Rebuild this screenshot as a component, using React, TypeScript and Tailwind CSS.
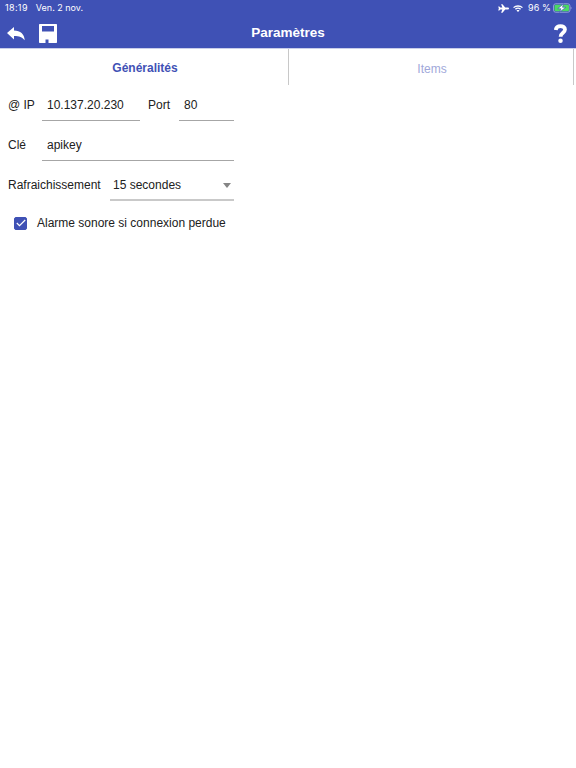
import { useState } from 'react';

function StatusBar() {
  return (
    <div className="flex h-4 items-center justify-between pl-[5px] pr-[4px] font-['Inter','Liberation_Sans',sans-serif] text-[9px] leading-4 tracking-[0.2px] text-white">
      <div className="flex gap-[8px]">
        <span className="tracking-[0.35px]">18:19</span>
        <span className="tracking-normal">Ven. 2 nov.</span>
      </div>
      <div className="flex items-center">
        <svg className="mr-[4px] h-[9px] w-[11px]" viewBox="0 0 22 18" fill="currentColor">
          <path d="M22 9c0-1.200-1.200-1.900-2.600-1.900h-5L9 .3H6.200l2.500 6.800H4.600L2.600 5H.4l1.300 4-1.300 4h2.200l2-2.100h4.100l-2.500 6.800H9l5.400-6.800h5c1.400 0 2.600-.7 2.600-1.900z" />
        </svg>
        <svg className="mr-[5px] h-[7px] w-[10px]" viewBox="0 0 18 14" preserveAspectRatio="none" fill="none" stroke="currentColor" strokeWidth="2.600">
          <path d="M1 5.200c4.500-4.300 11.500-4.300 16 0" />
          <path d="M4.300 8.500c2.700-2.500 6.700-2.500 9.400 0" />
          <path d="M6.300 11c1.600-1.300 3.800-1.300 5.400 0L9 13.800z" fill="currentColor" stroke="none" />
        </svg>
        <span className="mr-[2px] tracking-[0.1px]">96 %</span>
        <svg className="h-[10px] w-[19px]" viewBox="0 0 38 20">
          <rect x="1" y="1.500" width="33" height="17" rx="4.500" fill="none" stroke="#a9b3e6" strokeWidth="1.500" />
          <rect x="3" y="3.500" width="29" height="13" rx="2.500" fill="#4cd964" />
          <path d="M35.500 7.500c2 .8 2 4.200 0 5z" fill="#a9b3e6" />
          <path d="M21 1.500 9.500 11.500H16l-3 7L25.500 8.500H19z" fill="#fff" stroke="#3f51b5" strokeWidth="1.300" />
        </svg>
      </div>
    </div>
  );
}

function Toolbar() {
  return (
    <div className="grid h-8 grid-cols-3 items-center text-white">
      <div className="flex items-center">
        <button className="ml-[7px]" aria-label="Retour">
          <svg className="mt-[3px] h-[14px] w-[18px]" viewBox="0 0 36 28" fill="currentColor">
            <path d="M0 12 14 0v7c13 0 20.500 7 21.500 19.500C30 20.500 25 18 14 18v7z" />
          </svg>
        </button>
        <button className="ml-[14px]" aria-label="Enregistrer">
          <svg className="mt-[2px] h-[19px] w-[18px]" viewBox="0 0 36 38" fill="currentColor">
            <path fillRule="evenodd" d="M1.500 0h33A1.500 1.500 0 0 1 36 1.500v35a1.500 1.500 0 0 1-1.500 1.500H19v-7h-6v7H1.500A1.500 1.500 0 0 1 0 36.500v-35A1.500 1.500 0 0 1 1.500 0zM6 4v11h24V4z" />
          </svg>
        </button>
      </div>
      <h1 className="pt-[2px] text-center text-[13.5px] font-bold">Paramètres</h1>
      <button className="mr-[9px] justify-self-end" aria-label="Aide">
        <svg className="mt-[2px] h-[19px] w-[13px]" viewBox="0 0 26 38">
          <path d="M3.500 12C4 6.500 7.500 4 13 4c5.500 0 9 3 9 7.200 0 6.300-8.800 6.300-8.800 14.300" fill="none" stroke="currentColor" strokeWidth="7.500" />
          <circle cx="13" cy="33.300" r="4.500" fill="currentColor" />
        </svg>
      </button>
    </div>
  );
}

export default function App() {
  const [tab, setTab] = useState('general');
  const [ip, setIp] = useState('10.137.20.230');
  const [port, setPort] = useState('80');
  const [apiKey, setApiKey] = useState('apikey');
  const [alarm, setAlarm] = useState(true);

  return (
    <div className="min-h-screen bg-white font-['Liberation_Sans',Arial,sans-serif] text-[12px] text-[#212121]">
      <header className="h-[49px] border-b border-[#c9cde9] bg-[#3f51b5]">
        <StatusBar />
        <Toolbar />
      </header>

      <nav className="flex h-9 pr-[2px]">
        <button
          onClick={() => setTab('general')}
          className={`w-[289px] border-r border-[#c8c8c8] pl-[2px] pt-[2px] text-[12px] ${tab === 'general' ? 'font-bold text-[#3f51b5]' : 'text-[#9fa8da]'}`}
        >
          Généralités
        </button>
        <button
          onClick={() => setTab('items')}
          className={`flex-1 border-r border-[#c8c8c8] pl-[2px] pt-[3px] text-[12px] ${tab === 'items' ? 'font-bold text-[#3f51b5]' : 'text-[#9fa8da]'}`}
        >
          Items
        </button>
      </nav>

      <main className="w-[234px] pl-2 pt-1">
        <div className="flex h-8 items-center">
          <label htmlFor="ip" className="w-[34px]">@ IP</label>
          <input id="ip" value={ip} onChange={(e) => setIp(e.target.value)} className="h-8 w-[98px] border-b border-[#a6a6a6] pl-[5px] outline-none" />
          <label htmlFor="port" className="ml-[8px] w-[31px]">Port</label>
          <input id="port" value={port} onChange={(e) => setPort(e.target.value)} className="h-8 w-[55px] border-b border-[#a6a6a6] pl-[5px] outline-none" />
        </div>

        <div className="mt-2 flex h-8 items-center">
          <label htmlFor="key" className="w-[34px]">Clé</label>
          <input id="key" value={apiKey} onChange={(e) => setApiKey(e.target.value)} className="h-8 w-[192px] border-b border-[#a6a6a6] pl-[5px] outline-none" />
        </div>

        <div className="mt-2 flex h-8 items-center">
          <span className="w-[102px]">Rafraichissement</span>
          <button className="flex h-8 w-[124px] items-center justify-between border-b-2 border-[#c9c9c9] pl-[3px] pr-[3px] pt-[2px]">
            <span>15 secondes</span>
            <svg className="h-[5px] w-[8px]" viewBox="0 0 9 5" preserveAspectRatio="none" fill="#858585">
              <path d="M0 0h9L4.500 5z" />
            </svg>
          </button>
        </div>

        <label className="mt-3 flex h-5 items-center whitespace-nowrap pl-[6px]">
          <input type="checkbox" className="sr-only" checked={alarm} onChange={() => setAlarm(!alarm)} />
          <span className={`mr-[10px] flex h-[13px] w-[13px] items-center justify-center rounded-[2px] border border-[#3f51b5] ${alarm ? 'bg-[#3f51b5]' : 'bg-white'}`}>
            <svg className="h-[8px] w-[10px]" viewBox="0 0 10 8" fill="none" stroke="#fff" strokeWidth="1.200">
              <path d="M.8 4 3.500 6.700 9.200 1" />
            </svg>
          </span>
          Alarme sonore si connexion perdue
        </label>
      </main>
    </div>
  );
}
